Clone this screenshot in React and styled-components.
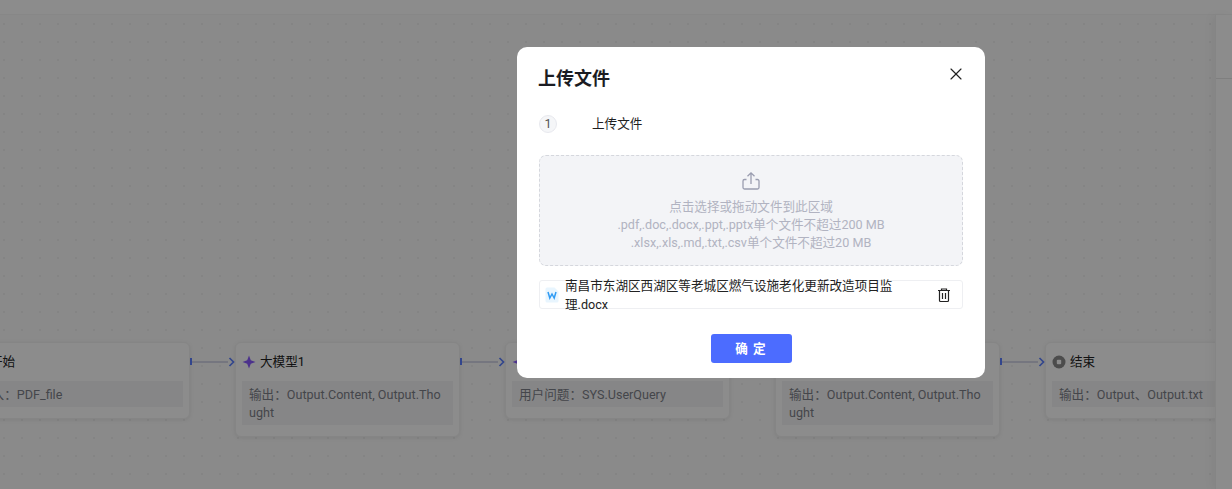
import React from "react";
import styled, { createGlobalStyle } from "styled-components";
import { X } from "lucide-react";

const Global = createGlobalStyle`
  html, body { margin: 0; padding: 0; height: 100%; overflow: hidden; background: #fff; }
  #root { height: 100%; }
  * { box-sizing: border-box; }
  body { font-family: Roboto, "Noto Sans CJK SC", "Noto Sans", sans-serif; font-size: 12.6px; line-height: 18px; }
`;

const Page = styled.div`
  position: relative;
  display: flex;
  flex-direction: column;
  width: 1232px;
  height: 489px;
  overflow: hidden;
`;
const TopBar = styled.div`
  flex: none;
  height: 15px;
  background: #fff;
  border-bottom: 1px solid #f6f6f6;
`;
const Workspace = styled.div`
  flex: 1;
  display: flex;
  min-height: 0;
`;
const Canvas = styled.div`
  position: relative;
  flex: 1;
  overflow: hidden;
  background-color: #fbfbfb;
  background-image: radial-gradient(circle, #f0f0f0 1.1px, transparent 1.3px);
  background-size: 18px 18px;
  background-position: -5px 0;
`;
const SidePanel = styled.aside`
  flex: none;
  width: 17px;
  display: flex;
  flex-direction: column;
  background: #fff;
  box-shadow: -4px 0 8px rgba(0, 0, 0, 0.04);
  border-left: 1px solid #f2f2f2;
  z-index: 1;
`;
const SideTop = styled.div`
  height: 64px;
  border-bottom: 1px solid #e8e8e8;
`;
const Node = styled.div`
  position: absolute;
  top: 327px;
  left: ${(p) => p.$x}px;
  width: 225px;
  padding: 6px 6px 11px;
  background: #fff;
  border: 1px solid #f3f3f3;
  border-radius: 6px;
  box-shadow: 0 1px 4px rgba(0, 0, 0, 0.08);
`;
const NodeTitle = styled.div`
  display: flex;
  align-items: center;
  gap: 4px;
  height: 26px;
  margin-bottom: 6px;
  color: #222;
  svg { flex: none; }
`;
const NodeBody = styled.div`
  padding: 5px 7px 3px;
  width: 211px;
  background: #f5f5f6;
  color: #7d8089;
  word-break: break-all;
`;
const Edge = styled.div`
  position: absolute;
  top: 343px;
  left: ${(p) => p.$x}px;
  width: 45px;
  height: 7px;
  display: flex;
  align-items: center;
  color: #5b7fff;
`;
const EdgeStart = styled.span`
  width: 2px;
  height: 7px;
  background: #5b7fff;
  flex: none;
`;
const EdgeLine = styled.span`
  flex: 1;
  height: 2px;
  background: #d5d8e8;
`;
const Overlay = styled.div`
  position: absolute;
  inset: 0;
  background: rgba(0, 0, 0, 0.45);
  z-index: 5;
`;
const Modal = styled.div`
  position: absolute;
  left: 517px;
  top: 47px;
  width: 468px;
  height: 331px;
  background: #fff;
  border-radius: 10px;
  padding: 0 22px;
  z-index: 6;
  display: flex;
  flex-direction: column;
`;
const ModalHead = styled.div`
  display: flex;
  justify-content: space-between;
  height: 62px;
  padding-top: 19px;
`;
const Title = styled.h2`
  margin: 0 0 0 -1px;
  font-size: 18px;
  line-height: 26px;
  font-weight: 700;
  color: #1b1c22;
`;
const Close = styled.button`
  position: absolute;
  top: 20px;
  right: 22px;
  width: 14px;
  height: 14px;
  padding: 0;
  border: 0;
  background: none;
  color: #222;
  display: flex;
  align-items: center;
  justify-content: center;
  svg { flex: none; }
`;
const Step = styled.div`
  display: flex;
  align-items: center;
  height: 18px;
  margin-top: 6px;
  color: #1f1f1f;
`;
const StepNum = styled.span`
  width: 18px;
  height: 18px;
  border-radius: 50%;
  border: 1px solid #e8e9ee;
  background: #f5f6f8;
  color: #555;
  display: flex;
  align-items: center;
  justify-content: center;
  font-size: 12.6px;
  margin-right: 35px;
`;
const Drop = styled.div`
  margin-top: 22px;
  height: 111px;
  border: 1px dashed #d5d7dd;
  border-radius: 7px;
  background: #f3f4f7;
  color: #b1b3c1;
  display: flex;
  flex-direction: column;
  align-items: center;
  padding-top: 15px;
  text-align: center;
`;
const DropIcon = styled.svg`
  width: 20px;
  height: 20px;
  margin-bottom: 7px;
  color: #9a9db0;
`;
const FileRow = styled.div`
  margin-top: 14px;
  height: 29px;
  border: 1px solid #eeeff2;
  border-radius: 3px;
  display: flex;
  align-items: center;
  padding: 0 10px 0 5px;
  color: #222;
`;
const FileName = styled.div`
  width: 336px;
  margin-left: 6px;
  flex: none;
  line-height: 19px;
  word-break: break-all;
`;
const Trash = styled.svg`
  width: 16px;
  height: 16px;
  margin-left: auto;
  color: #222;
`;
const Footer = styled.div`
  margin-top: 25px;
  display: flex;
  justify-content: center;
`;
const Confirm = styled.button`
  width: 81px;
  height: 29px;
  border: 0;
  border-radius: 3px;
  background: #4c6cff;
  color: #fff;
  font: inherit;
  font-weight: 600;
  letter-spacing: 1px;
`;

const Star = () => (
  <svg width="14" height="14" viewBox="0 0 14 14"><path d="M7 0.5 L8.8 5.2 L13.5 7 L8.8 8.8 L7 13.5 L5.2 8.8 L0.5 7 L5.2 5.2Z" fill="#8a5cff" /></svg>
);
const EndIcon = () => (
  <svg width="14" height="14" viewBox="0 0 14 14"><circle cx="7" cy="7" r="6.5" fill="#8a8a8a" /><rect x="4.8" y="4.8" width="4.4" height="4.4" rx="1" fill="#fff" /></svg>
);
const Chevron = () => (
  <svg width="7" height="10" viewBox="0 0 7 10" style={{ flex: "none" }}><path d="M1.5 1 L5.5 5 L1.5 9" fill="none" stroke="currentColor" strokeWidth="1.7" /></svg>
);
const WordIcon = () => (
  <svg width="14" height="16" viewBox="0 0 14 16" style={{ flex: "none" }}>
    <path d="M2 0.5 H9.5 L13.5 4.5 V14 A1.5 1.5 0 0 1 12 15.5 H2 A1.5 1.5 0 0 1 0.5 14 V2 A1.5 1.5 0 0 1 2 0.5Z" fill="#e8f5fe" />
    <path d="M3 5 L4.8 11 L7 7 L9.2 11 L11 5" fill="none" stroke="#2f9bf4" strokeWidth="1.5" />
  </svg>
);

const nodes = [
  { x: -35, title: "开始", body: "输入：PDF_file" },
  { x: 235, title: "大模型1", icon: <Star />, body: "输出：Output.Content, Output.Thought" },
  { x: 505, title: "知识库1", icon: <Star />, body: "用户问题：SYS.UserQuery" },
  { x: 775, title: "大模型2", icon: <Star />, body: "输出：Output.Content, Output.Thought" },
  { x: 1045, title: "结束", icon: <EndIcon />, body: "输出：Output、Output.txt" },
];

export default function App() {
  return (
    <Page>
      <Global />
      <TopBar />
      <Workspace>
        <Canvas>
          {nodes.map((n) => (
            <Node key={n.x} $x={n.x}>
              <NodeTitle>
                {n.icon || <span style={{ width: 14 }} />}
                {n.title}
              </NodeTitle>
              <NodeBody>{n.body}</NodeBody>
            </Node>
          ))}
          {[190, 460, 730, 1000].map((x) => (
            <Edge key={x} $x={x}>
              <EdgeStart />
              <EdgeLine />
              <Chevron />
            </Edge>
          ))}
        </Canvas>
        <SidePanel>
          <SideTop />
        </SidePanel>
      </Workspace>
      <Overlay />
      <Modal>
        <ModalHead>
          <Title>上传文件</Title>
          <Close aria-label="关闭"><X size={20} strokeWidth={1.4} /></Close>
        </ModalHead>
        <Step>
          <StepNum>1</StepNum>
          上传文件
        </Step>
        <Drop>
          <DropIcon viewBox="0 0 20 20" fill="none" stroke="currentColor" strokeWidth="1.3">
            <path d="M10 13 V2 M6.5 5.3 L10 1.8 L13.5 5.3" />
            <path d="M5.5 8.5 H3.5 A1.5 1.5 0 0 0 2 10 V16.5 A1.5 1.5 0 0 0 3.5 18 H16.5 A1.5 1.5 0 0 0 18 16.5 V10 A1.5 1.5 0 0 0 16.5 8.5 H14.5" />
          </DropIcon>
          <span>点击选择或拖动文件到此区域</span>
          <span>.pdf,.doc,.docx,.ppt,.pptx单个文件不超过200 MB</span>
          <span>.xlsx,.xls,.md,.txt,.csv单个文件不超过20 MB</span>
        </Drop>
        <FileRow>
          <WordIcon />
          <FileName>南昌市东湖区西湖区等老城区燃气设施老化更新改造项目监理.docx</FileName>
          <Trash viewBox="0 0 16 16" fill="none" stroke="currentColor" strokeWidth="1.2">
            <path d="M2 3.5 H14 M5.5 3.5 V2 H10.5 V3.5 M3.5 3.5 V13.5 A1 1 0 0 0 4.5 14.5 H11.5 A1 1 0 0 0 12.5 13.5 V3.5 M6.5 6 V12 M9.5 6 V12" />
          </Trash>
        </FileRow>
        <Footer>
          <Confirm>确 定</Confirm>
        </Footer>
      </Modal>
    </Page>
  );
}
